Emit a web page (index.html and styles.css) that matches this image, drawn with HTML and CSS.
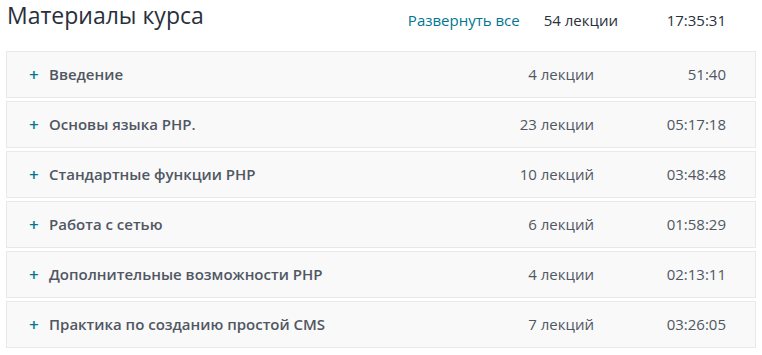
FILE: index.html
```html
<!DOCTYPE html>
<html lang="ru">
<head>
<meta charset="utf-8">
<link rel="stylesheet" href="styles.css">
</head>
<body>
<div class="curriculum">
  <div class="header">
    <h2 class="title">Материалы курса</h2>
    <a class="expand" href="#">Развернуть все</a>
    <span class="total-count">54 лекции</span>
    <span class="total-time">17:35:31</span>
  </div>
  <div class="sections">
    <div class="section"><span class="plus">+</span><span class="name">Введение</span><span class="count">4 лекции</span><span class="time">51:40</span></div>
    <div class="section"><span class="plus">+</span><span class="name">Основы языка PHP.</span><span class="count">23 лекции</span><span class="time">05:17:18</span></div>
    <div class="section"><span class="plus">+</span><span class="name">Стандартные функции PHP</span><span class="count">10 лекций</span><span class="time">03:48:48</span></div>
    <div class="section"><span class="plus">+</span><span class="name">Работа с сетью</span><span class="count">6 лекций</span><span class="time">01:58:29</span></div>
    <div class="section"><span class="plus">+</span><span class="name">Дополнительные возможности PHP</span><span class="count">4 лекции</span><span class="time">02:13:11</span></div>
    <div class="section"><span class="plus">+</span><span class="name">Практика по созданию простой CMS</span><span class="count">7 лекций</span><span class="time">03:26:05</span></div>
  </div>
</div>
</body>
</html>
```
FILE: styles.css
```css
html, body {
  margin: 0;
  padding: 0;
  background: #fff;
}
body {
  font-family: "Open Sans", "Liberation Sans", sans-serif;
  color: #505763;
}
.curriculum {
  width: 750px;
  padding: 0 0 0 6px;
}
.header {
  display: flex;
  align-items: flex-start;
  height: 51px;
  padding: 0 30px 0 1px;
  box-sizing: border-box;
}
.title {
  margin: 0;
  font-size: 23px;
  font-weight: 400;
  color: #29303b;
  flex: 1;
  line-height: 30px;
}
.expand,
.total-count,
.total-time {
  font-size: 15px;
  line-height: 20px;
  margin-top: 10px;
}
.expand {
  color: #007791;
  text-decoration: none;
}
.total-count {
  margin-left: 24px;
  color: #29303b;
}
.total-time {
  width: 108px;
  text-align: right;
  color: #29303b;
}
.sections {
  display: flex;
  flex-direction: column;
  gap: 3px;
}
.section {
  display: flex;
  align-items: center;
  height: 47px;
  box-sizing: border-box;
  background: #f9f9f9;
  border: 1px solid #e8e9eb;
  padding: 0 29px 1px 22px;
  font-size: 15px;
}
.plus {
  width: 20px;
  color: #007791;
  font-size: 17px;
  font-weight: 600;
  line-height: 1;
}
.name {
  flex: 1;
  font-weight: 600;
}
.count {
  text-align: right;
}
.time {
  width: 132px;
  text-align: right;
}
```
